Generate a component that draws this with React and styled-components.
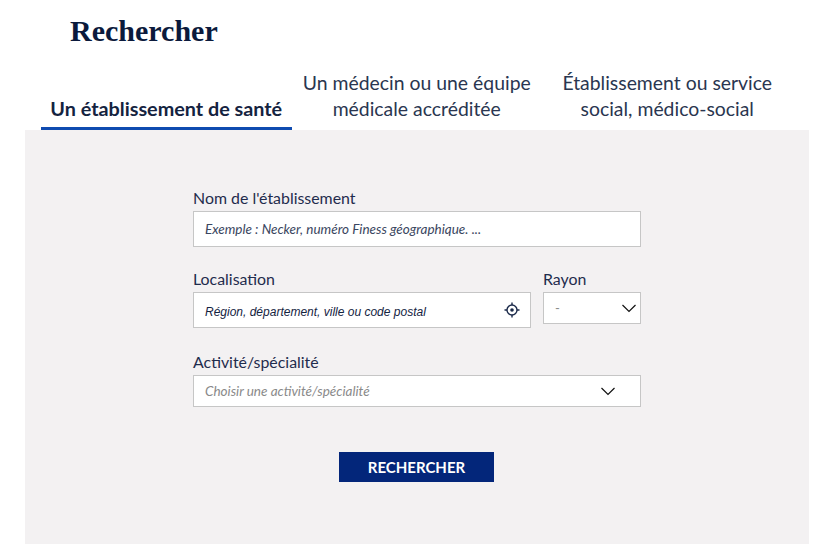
import React from "react";
import styled, { createGlobalStyle } from "styled-components";

const Global = createGlobalStyle`
  html, body { margin: 0; padding: 0; background: #fff; }
  body { font-family: "Lato", "Noto Sans", sans-serif; color: #1b2a4a; }
`;

const Page = styled.div`
  width: 829px;
  height: 559px;
  overflow: hidden;
  padding: 0 20px 15px 25px;
  box-sizing: border-box;
  display: flex;
  flex-direction: column;
`;

const Title = styled.h1`
  margin: 0;
  height: 67px;
  padding: 13px 0 0 45px;
  box-sizing: border-box;
  font-family: "Liberation Serif", serif;
  font-weight: 700;
  font-size: 30px;
  line-height: 36px;
  color: #0b1a3c;
`;

const Tabs = styled.div`
  display: flex;
  height: 63px;
  padding-left: 16px;
`;

const Tab = styled.div`
  width: 250.5px;
  box-sizing: border-box;
  display: flex;
  align-items: flex-end;
  justify-content: center;
  text-align: center;
  font-size: 19.4px;
  line-height: 26px;
  padding-bottom: 5px;
  color: #2a3650;
  border-bottom: 3px solid transparent;
  ${(p) => p.$active && `
    font-size: 19.8px;
    font-weight: 700;
    color: #14233f;
    padding-bottom: 6px;
    border-bottom-color: #0f4bb0;
  `}
`;

const Panel = styled.div`
  flex: 1;
  background: #f3f1f2;
  padding: 58px 0 0 168px;
`;

const Form = styled.form`
  width: 448px;
  display: flex;
  flex-direction: column;
`;

const Row = styled.div`
  display: flex;
  gap: 12px;
  margin-top: ${(p) => p.$top}px;
`;

const Field = styled.div`
  display: flex;
  flex-direction: column;
  width: ${(p) => p.$width}px;
`;

const Label = styled.label`
  font-size: 15.9px;
  line-height: 20px;
  height: 23px;
  color: #1f2c4d;
`;

const Box = styled.div`
  height: ${(p) => p.$height}px;
  box-sizing: border-box;
  background: #fff;
  border: 1px solid #c6c6c6;
  display: flex;
  align-items: center;
  justify-content: space-between;
  padding: 0 ${(p) => p.$right}px 0 11px;
`;

const Hint = styled.span`
  font-family: ${(p) => (p.$arial ? '"Liberation Sans", sans-serif' : '"Lato", sans-serif')};
  font-style: italic;
  font-size: ${(p) => (p.$arial ? 12 : 13.5)}px;
  margin-top: ${(p) => (p.$arial ? 3 : -1)}px;
  color: ${(p) => p.$color};
`;

const Dash = styled.span`
  font-size: 13px;
  color: #8b8b8b;
`;

const Actions = styled.div`
  display: flex;
  justify-content: center;
  margin-top: 45px;
  padding-right: 1px;
`;

const Submit = styled.button`
  width: 155px;
  height: 30px;
  border: 0;
  padding: 0;
  background: #03267a;
  color: #fff;
  font-family: "Lato", sans-serif;
  font-weight: 700;
  font-size: 15px;
`;

const Chevron = () => (
  <svg width="14" height="9" viewBox="0 0 14 9" fill="none" stroke="#111" strokeWidth="1.2">
    <path d="M0.5 1 L7 7.5 L13.5 1" />
  </svg>
);

const Target = () => (
  <svg width="16" height="16" viewBox="0 0 16 16" fill="none" stroke="#1b2a4a">
    <circle cx="8" cy="8" r="5" strokeWidth="1.4" />
    <circle cx="8" cy="8" r="1.8" fill="#1b2a4a" stroke="none" />
    <path d="M8 0.5V3M8 13V15.5M0.5 8H3M13 8H15.5" strokeWidth="1.4" />
  </svg>
);

export default function App() {
  return (
    <Page>
      <Global />
      <Title>Rechercher</Title>
      <Tabs>
        <Tab $active>Un établissement de santé</Tab>
        <Tab>Un médecin ou une équipe<br />médicale accréditée</Tab>
        <Tab>Établissement ou service<br />social, médico-social</Tab>
      </Tabs>
      <Panel>
        <Form>
          <Field $width={448}>
            <Label>Nom de l'établissement</Label>
            <Box $height={36} $right={12}>
              <Hint $color="#3a4660">Exemple : Necker, numéro Finess géographique. ...</Hint>
            </Box>
          </Field>
          <Row $top={22}>
            <Field $width={338}>
              <Label>Localisation</Label>
              <Box $height={36} $right={10}>
                <Hint $arial $color="#14233f">Région, département, ville ou code postal</Hint>
                <Target />
              </Box>
            </Field>
            <Field $width={98}>
              <Label>Rayon</Label>
              <Box $height={32} $right={4}>
                <Dash>-</Dash>
                <Chevron />
              </Box>
            </Field>
          </Row>
          <Row $top={24}>
            <Field $width={448}>
              <Label>Activité/spécialité</Label>
              <Box $height={32} $right={25}>
                <Hint $color="#8a8a8a">Choisir une activité/spécialité</Hint>
                <Chevron />
              </Box>
            </Field>
          </Row>
          <Actions>
            <Submit type="button">RECHERCHER</Submit>
          </Actions>
        </Form>
      </Panel>
    </Page>
  );
}
